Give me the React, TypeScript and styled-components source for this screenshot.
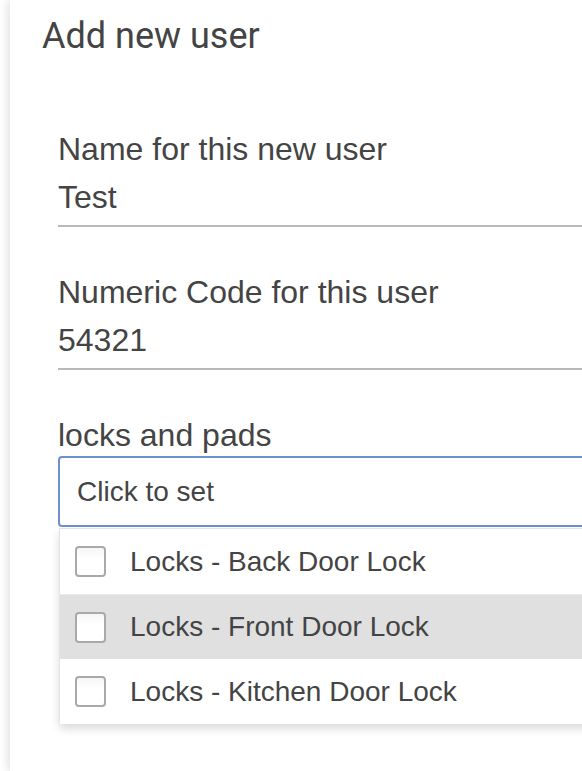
import React from "react";
import styled, { createGlobalStyle } from "styled-components";

const Global = createGlobalStyle`
  html, body { margin: 0; padding: 0; background: #fff; overflow: hidden; }
  body { font-family: "Liberation Sans", Arial, sans-serif; color: #444; }
`;

const Page = styled.div`
  padding-left: 10px;
  width: 700px;
`;

const Panel = styled.section`
  background: #fff;
  box-shadow: -2px 0 9px rgba(0, 0, 0, 0.13);
  padding: 14px 0 48px 32px;
  min-height: 760px;
  box-sizing: border-box;
`;

const Title = styled.h2`
  margin: 0;
  font-family: Roboto, "Liberation Sans", sans-serif;
  font-weight: 400;
  font-size: 36px;
  line-height: 44px;
  color: #444;
`;

const Form = styled.div`
  padding-left: 16px;
  padding-top: 73px;
  display: flex;
  flex-direction: column;
`;

const Field = styled.div`
  display: flex;
  flex-direction: column;
  margin-bottom: 47px;
`;

const Label = styled.label`
  font-size: 32px;
  line-height: 36px;
  margin-bottom: 12px;
`;

const Value = styled.div`
  font-size: 32px;
  line-height: 36px;
  padding-bottom: 10px;
  border-bottom: 2px solid #b9b9b9;
`;

const SelectLabel = styled(Label)`
  margin-bottom: 3px;
`;

const SelectBox = styled.div`
  height: 71px;
  box-sizing: border-box;
  border: 2px solid #6f8fd0;
  border-radius: 4px;
  display: flex;
  align-items: center;
  padding-left: 17px;
  font-size: 28px;
`;

const List = styled.ul`
  list-style: none;
  margin: 1px 0 0 1px;
  padding: 0;
  border-top: 1px solid #e4e4e4;
  border-left: 1px solid #e4e4e4;
  border-bottom-left-radius: 4px;
  box-shadow: 0 5px 8px rgba(0, 0, 0, 0.14);
  background: #fff;
`;

const Option = styled.li<{ $active?: boolean }>`
  height: 65px;
  display: flex;
  align-items: center;
  gap: 24px;
  padding-left: 15px;
  font-size: 28px;
  background: ${(p) => (p.$active ? "#e0e0e0" : "#fff")};
  border-top: ${(p) => (p.$active ? "1px solid #eaeaea" : "none")};
  box-sizing: border-box;
`;

const Check = styled.span`
  width: 31px;
  height: 31px;
  box-sizing: border-box;
  border: 2px solid #a9a9a9;
  border-radius: 4px;
  background: linear-gradient(#f6f6f6, #fff 40%);
  flex-shrink: 0;
`;

const options = [
  "Locks - Back Door Lock",
  "Locks - Front Door Lock",
  "Locks - Kitchen Door Lock",
];

export default function App() {
  return (
    <>
      <Global />
      <Page>
        <Panel>
          <Title>Add new user</Title>
          <Form>
            <Field>
              <Label>Name for this new user</Label>
              <Value>Test</Value>
            </Field>
            <Field>
              <Label>Numeric Code for this user</Label>
              <Value>54321</Value>
            </Field>
            <div>
              <SelectLabel as="div">locks and pads</SelectLabel>
              <SelectBox>Click to set</SelectBox>
              <List>
                {options.map((o, i) => (
                  <Option key={o} $active={i === 1}>
                    <Check />
                    {o}
                  </Option>
                ))}
              </List>
            </div>
          </Form>
        </Panel>
      </Page>
    </>
  );
}
